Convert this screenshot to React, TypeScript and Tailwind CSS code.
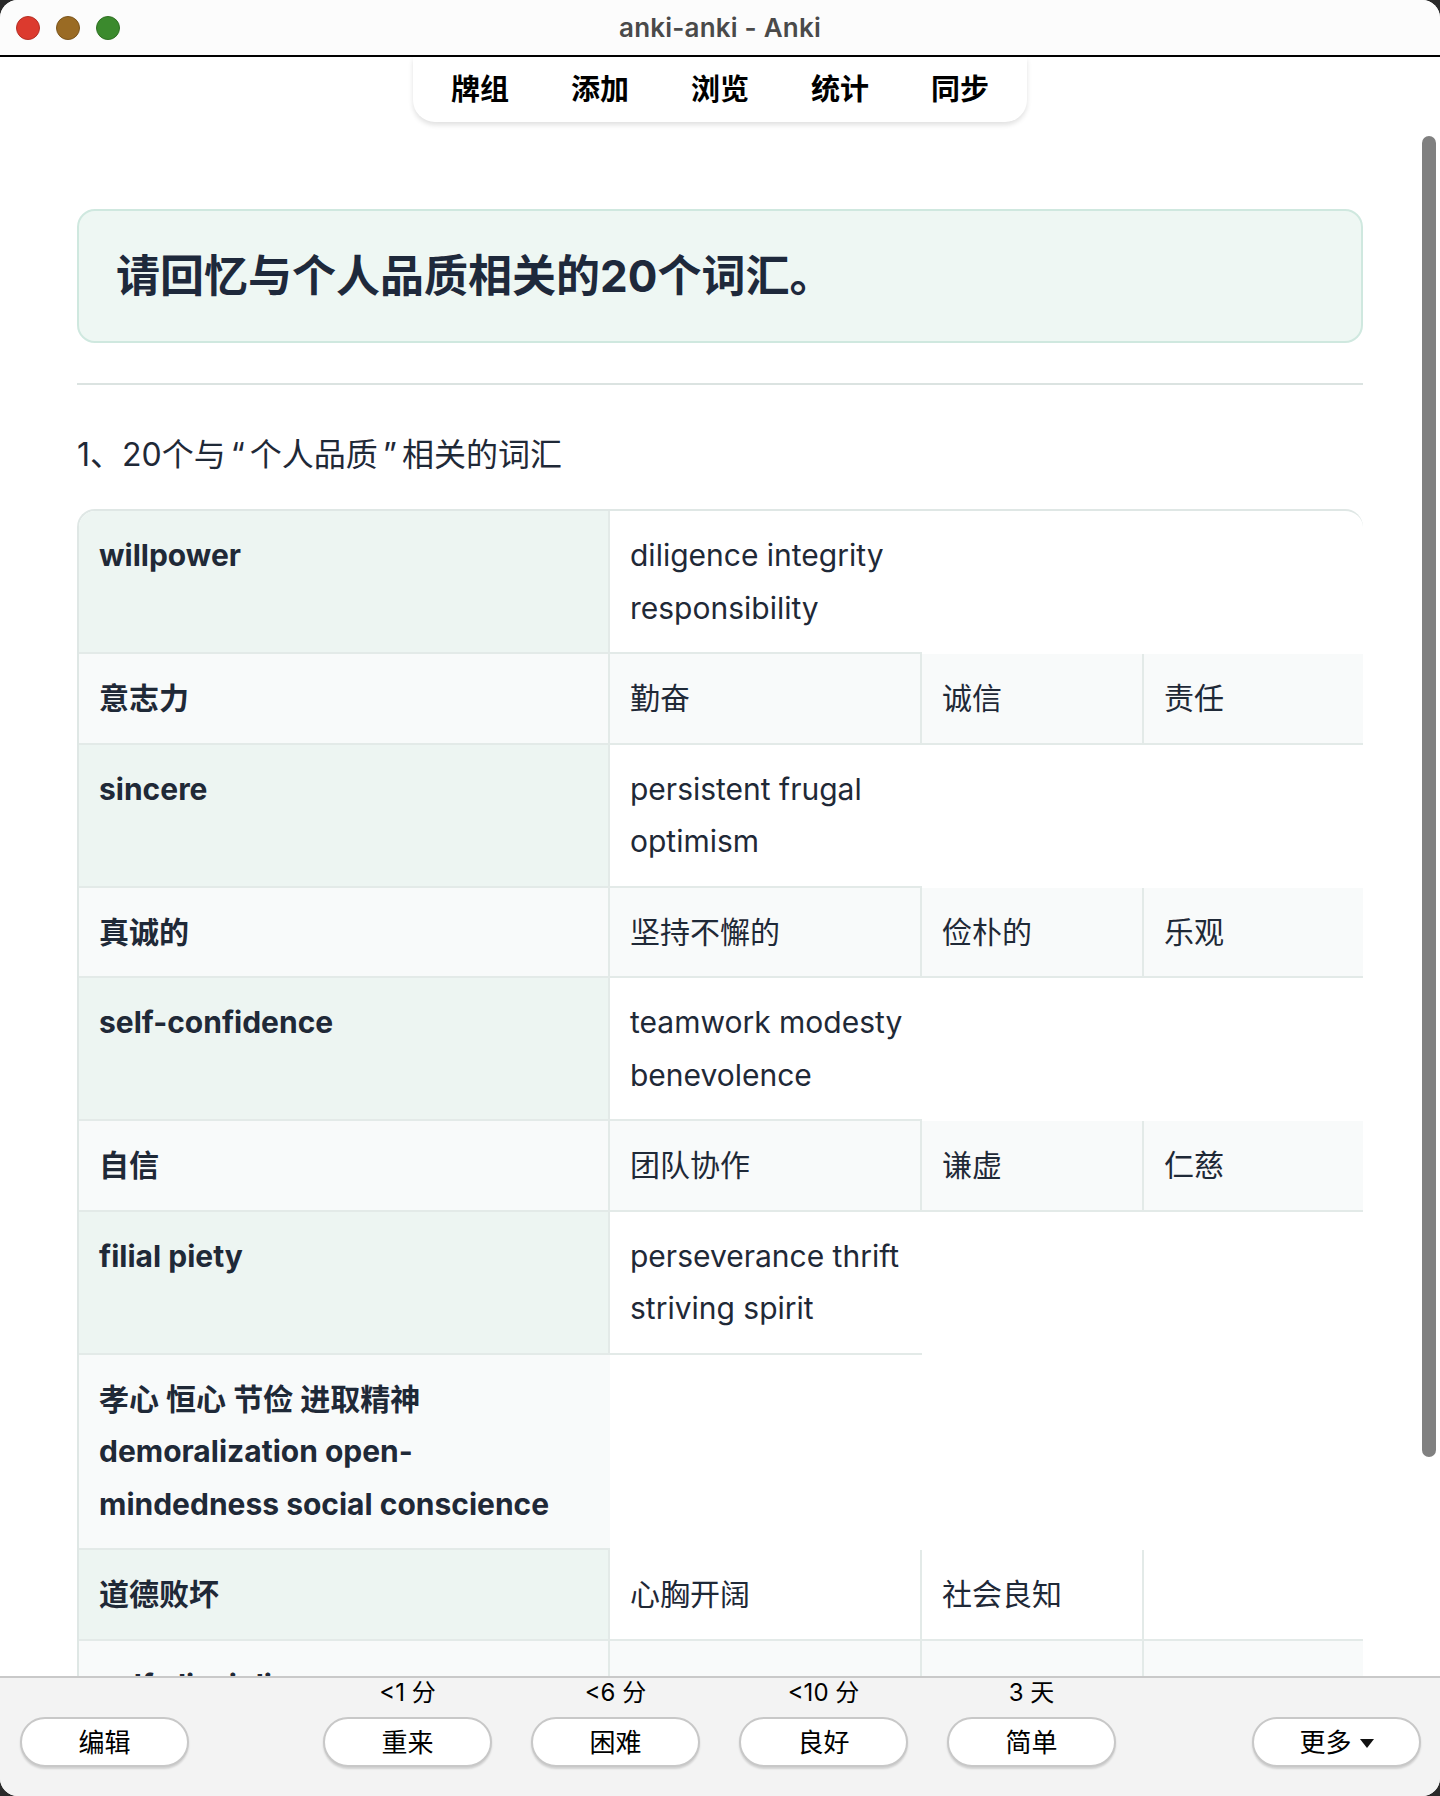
import React from "react";

type Tone = "mint" | "light" | "white";

type Cell = {
  lines: string[];
  bold?: boolean;
  tone: Tone;
};

const toneClass: Record<Tone, string> = {
  mint: "bg-[#edf5f2]",
  light: "bg-[#f8fafa]",
  white: "bg-white",
};

const rows: Cell[][] = [
  [
    { lines: ["willpower"], bold: true, tone: "mint" },
    { lines: ["diligence integrity", "responsibility"], tone: "white" },
  ],
  [
    { lines: ["意志力"], bold: true, tone: "light" },
    { lines: ["勤奋"], tone: "light" },
    { lines: ["诚信"], tone: "light" },
    { lines: ["责任"], tone: "light" },
  ],
  [
    { lines: ["sincere"], bold: true, tone: "mint" },
    { lines: ["persistent frugal", "optimism"], tone: "white" },
  ],
  [
    { lines: ["真诚的"], bold: true, tone: "light" },
    { lines: ["坚持不懈的"], tone: "light" },
    { lines: ["俭朴的"], tone: "light" },
    { lines: ["乐观"], tone: "light" },
  ],
  [
    { lines: ["self-confidence"], bold: true, tone: "mint" },
    { lines: ["teamwork modesty", "benevolence"], tone: "white" },
  ],
  [
    { lines: ["自信"], bold: true, tone: "light" },
    { lines: ["团队协作"], tone: "light" },
    { lines: ["谦虚"], tone: "light" },
    { lines: ["仁慈"], tone: "light" },
  ],
  [
    { lines: ["filial piety"], bold: true, tone: "mint" },
    { lines: ["perseverance thrift", "striving spirit"], tone: "white" },
  ],
  [
    {
      lines: ["孝心 恒心 节俭 进取精神", "demoralization open-", "mindedness social conscience"],
      bold: true,
      tone: "light",
    },
  ],
  [
    { lines: ["道德败坏"], bold: true, tone: "mint" },
    { lines: ["心胸开阔"], tone: "white" },
    { lines: ["社会良知"], tone: "white" },
    { lines: [""], tone: "white" },
  ],
  [
    { lines: ["self-discipline"], bold: true, tone: "light" },
    { lines: [""], tone: "light" },
    { lines: [""], tone: "light" },
    { lines: [""], tone: "light" },
  ],
];

function Light({ color }: { color: string }) {
  return <span className={`block w-[24px] h-[24px] rounded-full border ${color}`} />;
}

function TitleBar() {
  return (
    <div className="relative h-[55px] shrink-0 bg-[#fcfcfc] flex items-center">
      <div className="flex gap-[16px] pl-[16px]">
        <Light color="bg-[#dc3a2e] border-[#b52f25]" />
        <Light color="bg-[#9a6b24] border-[#7b551c]" />
        <Light color="bg-[#3b8a2d] border-[#2f7023]" />
      </div>
      <div className="absolute inset-0 flex items-center justify-center text-[26px] font-semibold text-[#4a4a4a] tracking-[0.2px]">
        anki-anki - Anki
      </div>
    </div>
  );
}

function NavBar() {
  const items = ["牌组", "添加", "浏览", "统计", "同步"];
  return (
    <div className="flex justify-center">
      <nav className="w-[614px] h-[65px] bg-white rounded-b-[22px] shadow-[0_3px_5px_rgba(0,0,0,0.12)] flex items-center justify-center gap-[62px]">
        {items.map((t) => (
          <span key={t} className="text-[29px] font-bold text-black leading-none">
            {t}
          </span>
        ))}
      </nav>
    </div>
  );
}

function WordTable() {
  return (
    <table className="table-fixed w-[1286px] border-separate border-spacing-0 border-t-2 border-l-2 border-[#dfe7e5] rounded-tl-[18px] rounded-tr-[18px]">
      <colgroup>
        <col className="w-[531px]" />
        <col className="w-[312px]" />
        <col className="w-[222px]" />
        <col className="w-[219px]" />
      </colgroup>
      <tbody>
        {rows.map((row, ri) => (
          <tr key={ri}>
            {row.map((cell, ci) => {
              const isLast = ci === row.length - 1;
              const first = ri === 0 && ci === 0;
              return (
                <td
                  key={ci}
                  className={`align-top px-[20px] py-[18px] border-b-2 border-[#e3eae8] text-[30px] leading-[52.5px] text-[#1f2937] whitespace-nowrap ${
                    toneClass[cell.tone]
                  } ${isLast ? "" : "border-r-2"} ${cell.bold ? "font-bold" : "font-normal"} ${
                    first ? "rounded-tl-[16px]" : ""
                  }`}
                >
                  {cell.lines.map((l, li) => (
                    <div key={li} className="min-h-[52.5px]">
                      {l}
                    </div>
                  ))}
                </td>
              );
            })}
          </tr>
        ))}
      </tbody>
    </table>
  );
}

function Content() {
  return (
    <div className="ml-[77px] w-[1286px] mt-[87px]">
      <div className="h-[134px] rounded-[18px] border-2 border-[#cfe8df] bg-[#eef7f3] flex items-center px-[37px]">
        <h1 className="text-[44px] font-bold text-[#1e293b] leading-none">请回忆与个人品质相关的20个词汇。</h1>
      </div>
      <div className="mt-[40px] h-[2px] bg-[#dbe3e1]" />
      <p className="mt-[46px] text-[32px] leading-[48px] text-[#1f2937]">
        1、20个与<span className="mx-[5px]">“</span>个人品质<span className="mx-[5px]">”</span>相关的词汇
      </p>
      <div className="mt-[30px]">
        <WordTable />
      </div>
    </div>
  );
}

function AnswerButton({ label, children }: { label?: string; children: React.ReactNode }) {
  return (
    <div className="flex flex-col items-center">
      {label !== undefined && (
        <div className="h-[30px] leading-[30px] text-[24px] text-black">{label}</div>
      )}
      <button className="mt-[9px] w-[169px] h-[50px] rounded-full bg-white border-2 border-[#c8c8c8] shadow-[0_2px_2px_rgba(0,0,0,0.14)] text-[26px] text-black flex items-center justify-center gap-[8px]">
        {children}
      </button>
    </div>
  );
}

function Footer() {
  return (
    <div className="h-[120px] shrink-0 bg-[#f3f3f3] border-t-2 border-[#c9c9c9] flex items-end pb-[29px] pl-[20px] pr-[19px]">
      <button className="w-[169px] h-[50px] rounded-full bg-white border-2 border-[#c8c8c8] shadow-[0_2px_2px_rgba(0,0,0,0.14)] text-[26px] text-black flex items-center justify-center">
        编辑
      </button>
      <div className="ml-[134px] flex gap-[39px] items-end">
        <AnswerButton label="<1 分">重来</AnswerButton>
        <AnswerButton label="<6 分">困难</AnswerButton>
        <AnswerButton label="<10 分">良好</AnswerButton>
        <AnswerButton label="3 天">简单</AnswerButton>
      </div>
      <button className="ml-auto w-[169px] h-[50px] rounded-full bg-white border-2 border-[#c8c8c8] shadow-[0_2px_2px_rgba(0,0,0,0.14)] text-[26px] text-black flex items-center justify-center gap-[8px]">
        <span>更多</span>
        <svg width="14" height="9" viewBox="0 0 14 9" className="mt-[2px]">
          <path d="M0 0 H14 L7 9 Z" fill="#111" />
        </svg>
      </button>
    </div>
  );
}

export default function App() {
  return (
    <div className="w-[1440px] h-[1796px] bg-[#2a2a2a] font-['Inter','Noto_Sans_CJK_SC',sans-serif]">
      <div className="w-full h-full rounded-[18px] overflow-hidden bg-white flex flex-col">
        <TitleBar />
        <div className="h-[2px] shrink-0 bg-black" />
        <div className="relative flex-1 overflow-hidden bg-white">
          <NavBar />
          <Content />
          {/* scroll thumb */}
          <div className="absolute left-[1422px] top-[79px] w-[14px] h-[1321px] rounded-full bg-[#808080]" />
        </div>
        <Footer />
      </div>
    </div>
  );
}
